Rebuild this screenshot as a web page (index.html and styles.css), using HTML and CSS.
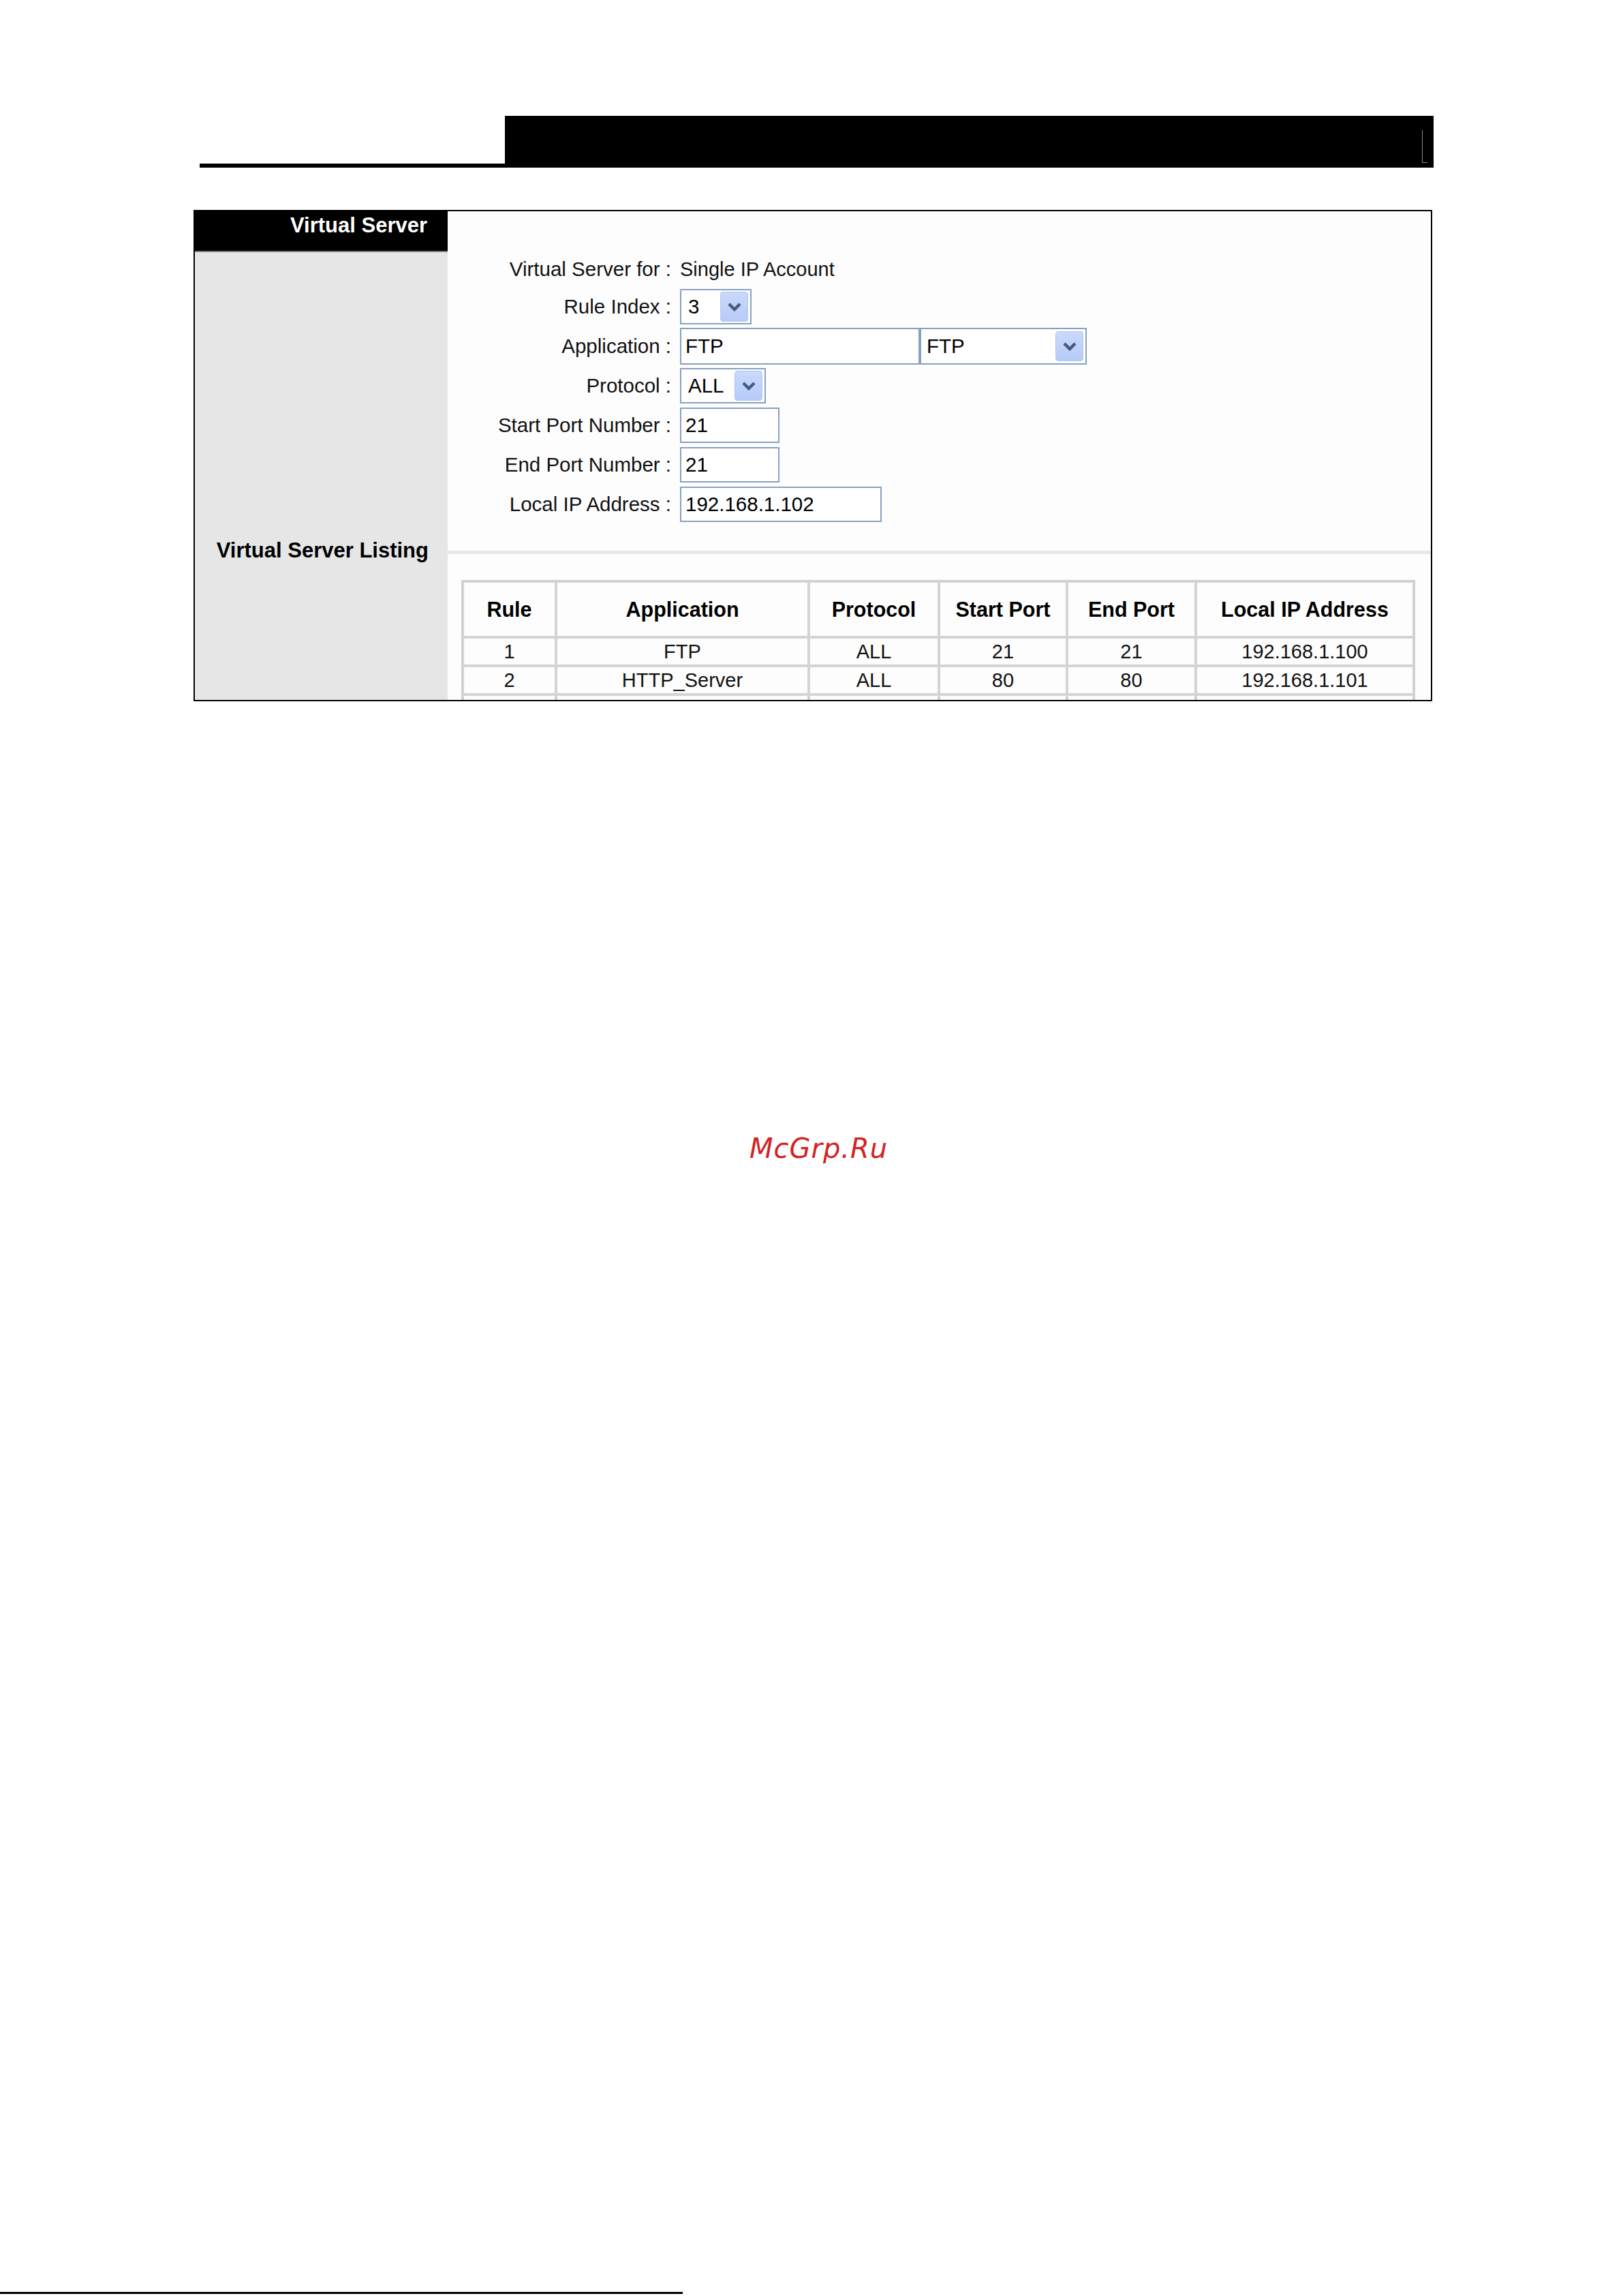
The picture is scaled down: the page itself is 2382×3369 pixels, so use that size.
FILE: index.html
```html
<!DOCTYPE html>
<html>
    <head>
        <title>Virtual Server</title>
        <link rel="stylesheet" href="styles.css">
    </head>
    <body>
        <div class="page">
            <!-- 页眉黑条 -->
            <div class="topbar">
                <div class="topbar_line"></div>
                <div class="topbar_block"><span class="topbar_mark"></span></div>
            </div>

            <div class="vs_box">
                <div class="vs_side">
                    <div class="vs_side_title">Virtual Server</div>
                </div>
                <div class="vs_form">
                    <div class="vs_row vs_row_first">
                        <div class="vs_label">Virtual Server for :</div>
                        <div class="vs_value">Single IP Account</div>
                    </div>
                    <div class="vs_row">
                        <div class="vs_label">Rule Index :</div>
                        <div class="vs_value">
                            <span class="sel sel_rule"><span class="sel_text">3</span><span class="sel_btn"><svg width="22" height="14" viewBox="0 0 22 14"><polyline points="3,3 11,11 19,3" fill="none" stroke="#485a7c" stroke-width="4.5"/></svg></span></span>
                        </div>
                    </div>
                    <div class="vs_row">
                        <div class="vs_label">Application :</div>
                        <div class="vs_value">
                            <span class="txt txt_app">FTP</span><span class="sel sel_app"><span class="sel_text">FTP</span><span class="sel_btn"><svg width="22" height="14" viewBox="0 0 22 14"><polyline points="3,3 11,11 19,3" fill="none" stroke="#485a7c" stroke-width="4.5"/></svg></span></span>
                        </div>
                    </div>
                    <div class="vs_row">
                        <div class="vs_label">Protocol :</div>
                        <div class="vs_value">
                            <span class="sel sel_proto"><span class="sel_text">ALL</span><span class="sel_btn"><svg width="22" height="14" viewBox="0 0 22 14"><polyline points="3,3 11,11 19,3" fill="none" stroke="#485a7c" stroke-width="4.5"/></svg></span></span>
                        </div>
                    </div>
                    <div class="vs_row">
                        <div class="vs_label">Start Port Number :</div>
                        <div class="vs_value"><span class="txt txt_port">21</span></div>
                    </div>
                    <div class="vs_row">
                        <div class="vs_label">End Port Number :</div>
                        <div class="vs_value"><span class="txt txt_port">21</span></div>
                    </div>
                    <div class="vs_row">
                        <div class="vs_label">Local IP Address :</div>
                        <div class="vs_value"><span class="txt txt_ip">192.168.1.102</span></div>
                    </div>
                </div>

                <div class="vs_side">
                    <div class="vs_side_label">Virtual Server Listing</div>
                </div>
                <div class="vs_list">
                    <table class="vs_table">
                        <colgroup>
                            <col style="width:137px"><col style="width:371px"><col style="width:191px">
                            <col style="width:188px"><col style="width:189px"><col>
                        </colgroup>
                        <tr>
                            <th>Rule</th><th>Application</th><th>Protocol</th><th>Start Port</th><th>End Port</th><th>Local IP Address</th>
                        </tr>
                        <tr>
                            <td>1</td><td>FTP</td><td>ALL</td><td>21</td><td>21</td><td>192.168.1.100</td>
                        </tr>
                        <tr>
                            <td>2</td><td>HTTP_Server</td><td>ALL</td><td>80</td><td>80</td><td>192.168.1.101</td>
                        </tr>
                        <tr>
                            <td></td><td></td><td></td><td></td><td></td><td></td>
                        </tr>
                    </table>
                </div>
            </div>

            <div class="mark">McGrp.Ru</div>

            <div class="page_fill"></div>
            <div class="page_rule"></div>
        </div>
    </body>
</html>
```

FILE: styles.css
```css
body{
    margin: 0;
    background-color: #fff;
    font-family: "Liberation Sans", Arial, sans-serif;
    color: #111;
}
.page{
    width: 2382px;
    min-height: 3369px;
    display: flex;
    flex-direction: column;
}
/* 页眉 */
.topbar{
    display: flex;
    align-items: flex-end;
    margin: 170px 0 0 293px;
}
.topbar_line{
    width: 448px;
    height: 6px;
    background-color: #000;
}
.topbar_block{
    width: 1363px;
    height: 76px;
    background-color: #000;
    display: flex;
    justify-content: flex-end;
    align-items: flex-end;
    padding: 0 9px 7px 0;
    box-sizing: border-box;
}
.topbar_mark{
    width: 7px;
    height: 47px;
    border-left: 1px solid #8a8a8a;
    border-bottom: 1px solid #8a8a8a;
}
/* 主框 */
.vs_box{
    margin: 62px 0 0 284px;
    width: 1818px;
    height: 721px;
    border: 2px solid #000;
    box-sizing: border-box;
    overflow: hidden;
    display: grid;
    grid-template-columns: 371px 1fr;
    grid-template-rows: 498px auto;
    background-color: #fdfdfd;
}
.vs_side{
    background-color: #e6e6e6;
}
.vs_side_title{
    height: 60px;
    box-sizing: border-box;
    background-color: #000;
    border-bottom: 2px solid #7a7a7a;
    color: #fff;
    font-weight: bold;
    font-size: 31px;
    line-height: 36px;
    padding: 3px 30px 0 0;
    text-align: right;
}
.vs_side_label{
    margin-top: -18px;
    font-weight: bold;
    font-size: 31px;
    line-height: 36px;
    text-align: right;
    padding-right: 28px;
    color: #000;
}
.vs_form{
    padding-top: 59px;
    display: flex;
    flex-direction: column;
}
.vs_row{
    display: flex;
    align-items: center;
    height: 58px;
}
.vs_row_first{
    height: 52px;
}
.vs_label{
    width: 328px;
    text-align: right;
    font-size: 29.5px;
    padding-right: 13px;
    white-space: nowrap;
}
.vs_value{
    display: flex;
    align-items: center;
    font-size: 29px;
    white-space: nowrap;
}
/* 输入框与下拉框 */
.txt,
.sel{
    display: flex;
    align-items: center;
    box-sizing: border-box;
    border: 2px solid #86a1c1;
    background-color: #fff;
    font-size: 29.5px;
    color: #000;
}
.txt{
    height: 52px;
    padding-left: 6px;
}
.txt_app{
    width: 352px;
    height: 54px;
}
.txt_port{
    width: 146px;
}
.txt_ip{
    width: 296px;
}
.sel{
    height: 52px;
    justify-content: space-between;
    padding: 0 3px 0 10px;
}
.sel_rule{
    width: 105px;
}
.sel_proto{
    width: 126px;
}
.sel_app{
    width: 245px;
    height: 54px;
    padding-left: 8px;
}
.sel_btn{
    width: 41px;
    height: 44px;
    border: 1px solid #b3c7ef;
    border-radius: 4px;
    background: linear-gradient(#c9d9fd, #b6cbf8);
    box-sizing: border-box;
    display: flex;
    align-items: center;
    justify-content: center;
}
/* 列表 */
.vs_list{
    border-top: 5px solid #e8e8e8;
    padding: 38px 23px 0 20px;
}
.vs_table{
    width: 100%;
    table-layout: fixed;
    border-collapse: separate;
    border-spacing: 0;
    border: 2px solid #cfcfcf;
}
.vs_table th,
.vs_table td{
    border: 2px solid #d4d4d4;
    text-align: center;
    padding: 0;
    white-space: nowrap;
}
.vs_table th{
    height: 78px;
    font-size: 30.5px;
    font-weight: bold;
    color: #000;
}
.vs_table td{
    height: 38px;
    font-size: 29px;
    line-height: 38px;
}
/* 水印 */
.mark{
    margin: 636px 0 0 1100px;
    font-family: "DejaVu Sans", sans-serif;
    font-style: italic;
    font-size: 40px;
    line-height: 40px;
    letter-spacing: 1px;
    color: #d42222;
}
.page_fill{
    flex: 1;
}
.page_rule{
    width: 1002px;
    height: 3px;
    background-color: #000;
    margin-bottom: 3px;
}
```
